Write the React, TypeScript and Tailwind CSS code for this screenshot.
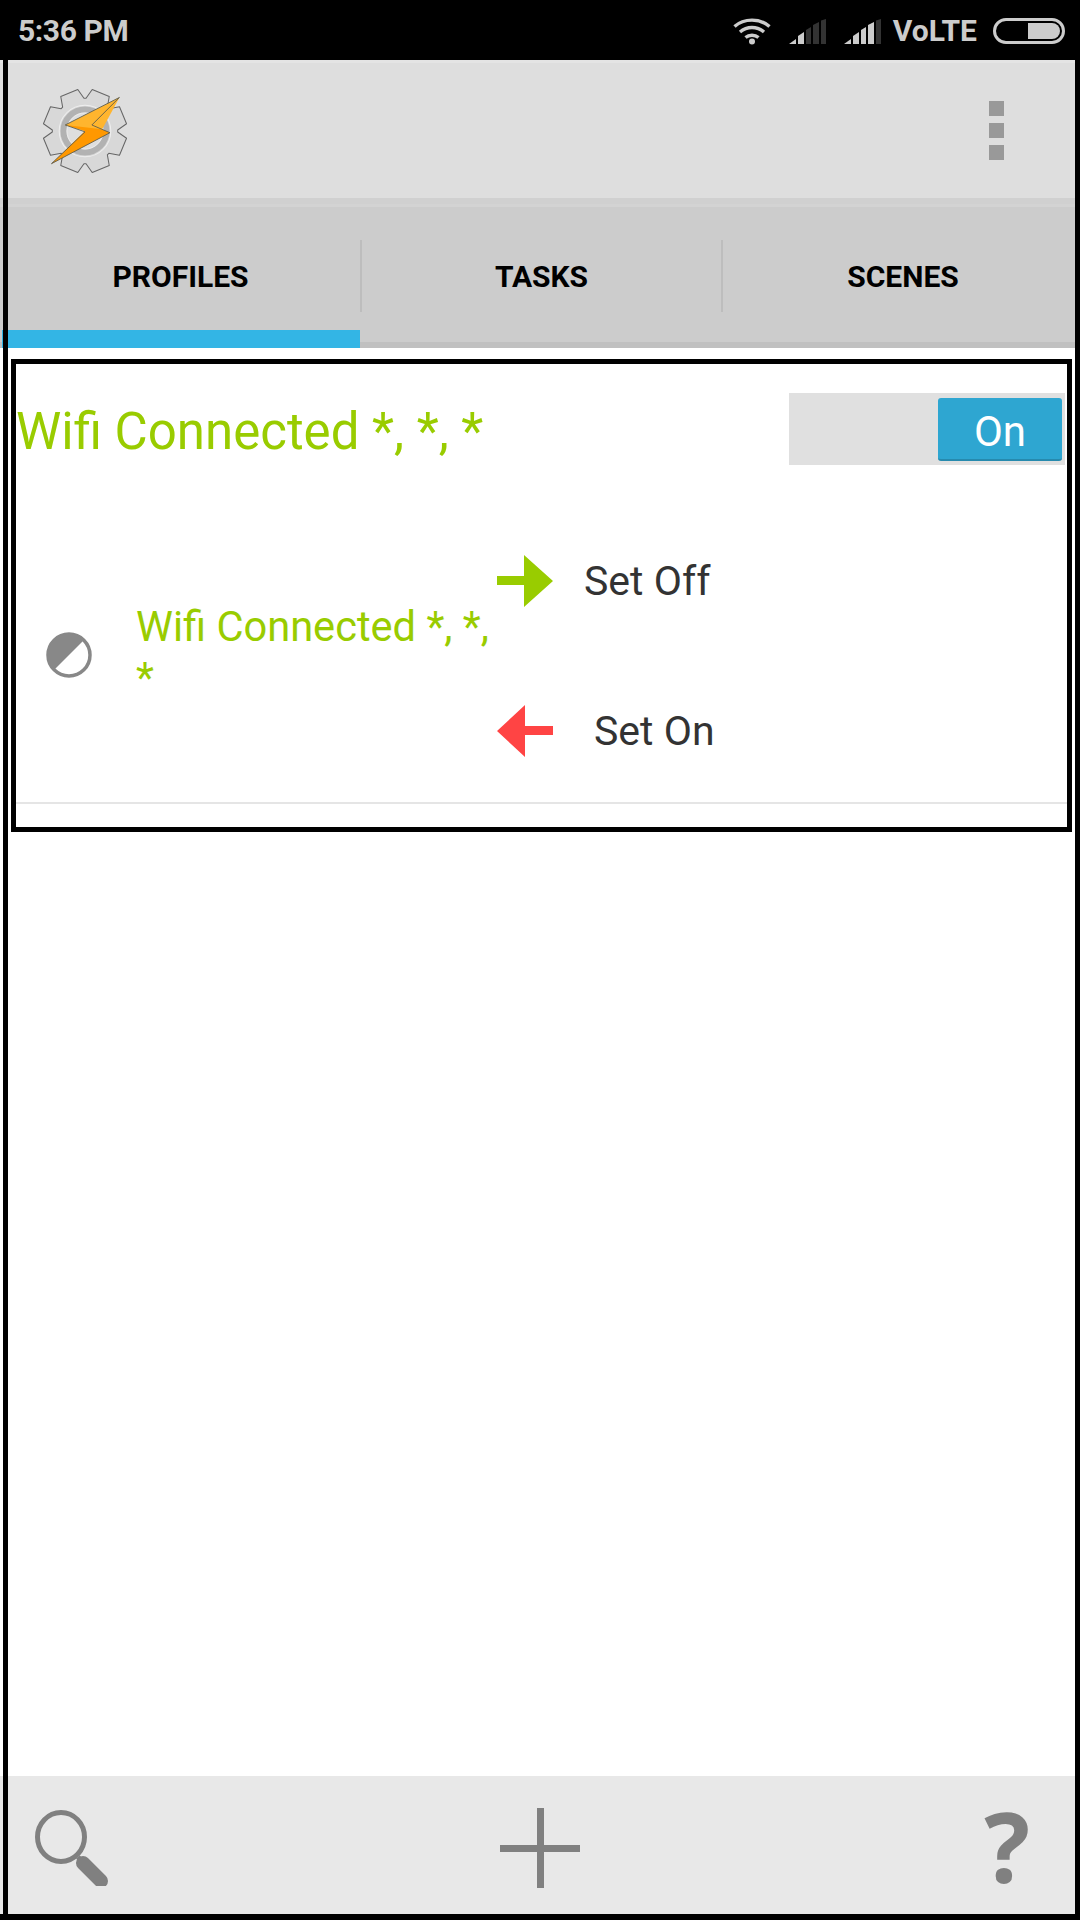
const roboto = { fontFamily: 'Roboto, "Liberation Sans", sans-serif' };

// 8-toothed gear outline around (50,50) in a 100 box
function gearPoints() {
  const pts: string[] = [];
  for (let i = 0; i < 8; i++) {
    const a = ((i * 45 + 22.5) * Math.PI) / 180;
    const corners: [number, number][] = [
      [38, -0.36],
      [49, -0.22],
      [49, 0.22],
      [38, 0.36],
    ];
    corners.forEach(([r, d]) => {
      pts.push(`${(50 + r * Math.cos(a + d)).toFixed(1)},${(50 + r * Math.sin(a + d)).toFixed(1)}`);
    });
  }
  return pts.join(' ');
}

function Logo() {
  return (
    <svg width="86" height="86" viewBox="0 0 100 100">
      <polygon points={gearPoints()} fill="#d8d8d8" stroke="#666" strokeWidth="1.2" strokeLinejoin="round" />
      <circle cx="50" cy="50" r="30" fill="none" stroke="#eee" strokeWidth="1.2" />
      <circle cx="50" cy="50" r="25" fill="none" stroke="#b2b2b2" strokeWidth="7" />
      <circle cx="50" cy="50" r="21" fill="#dedede" stroke="#eee" strokeWidth="1" />
      <polygon points="90,11 27,43 50,50 70,48" fill="#ffb52e" />
      <polygon points="27,43 50,50 11,88 79,52 70,48" fill="#ff9800" />
      <polygon points="90,11 27,43 50,51 11,88 79,52 58,43" fill="none" stroke="#5a5a4a" strokeWidth="1" strokeLinejoin="round" />
    </svg>
  );
}

function Wifi() {
  return (
    <svg width="38" height="28" viewBox="0 0 38 28" fill="none" stroke="#cccccc" strokeWidth="3.4">
      <path d="M1.5 9.5C11 1 27 1 36.5 9.5" />
      <path d="M7 15C14 9 24 9 31 15" />
      <path d="M12.5 20.5C16 17.5 22 17.5 25.5 20.5" />
      <circle cx="19" cy="24.5" r="3" fill="#cccccc" stroke="none" />
    </svg>
  );
}

function Signal({ lit }: { lit: number }) {
  const bars = [
    'M0 25L7 20V25Z',
    'M9 25V17L15 13V25Z',
    'M17 25V11L22 8V25Z',
    'M24 25V6L30 3V25Z',
    'M32 25V1.5L37 0V25Z',
  ];
  return (
    <svg width="37" height="25" viewBox="0 0 37 25">
      {bars.map((d, i) => (
        <path key={i} d={d} fill={i < lit ? '#cccccc' : '#333333'} />
      ))}
    </svg>
  );
}

function StatusBar() {
  return (
    <div className="h-[60px] bg-black flex items-center text-[#cccccc] font-bold text-[30px] shrink-0 pt-[2px]" style={roboto}>
      <span className="ml-[18px] leading-none tracking-[-0.4px]">5:36 PM</span>
      <div className="ml-auto flex items-center pr-[15px]">
        <Wifi />
        <div className="ml-[18px]"><Signal lit={2} /></div>
        <div className="ml-[18px]"><Signal lit={4} /></div>
        <span className="ml-[12px] leading-none">VoLTE</span>
        <div className="ml-[16px] w-[72px] h-[26px] rounded-full border-[3px] border-[#cccccc] flex justify-end p-[2px]">
          <div className="w-[32px] h-full bg-[#cccccc] rounded-r-full" />
        </div>
      </div>
    </div>
  );
}

function Header() {
  return (
    <div className="h-[138px] bg-[#dedede] border-t-[3px] border-[#e4e4e4] flex items-center justify-between pl-[42px] pr-[71px] shrink-0">
      <Logo />
      <div className="flex flex-col gap-[7px]">
        <div className="w-[15px] h-[15px] bg-[#999999]" />
        <div className="w-[15px] h-[15px] bg-[#999999]" />
        <div className="w-[15px] h-[15px] bg-[#999999]" />
      </div>
    </div>
  );
}

function Tabs() {
  return (
    <div className="relative shrink-0 border-t-[6px] border-[#d0d0d0]">
      <div className="h-[3px] bg-[#d3d3d3]" />
      <div className="h-[141px] bg-[#cccccc] border-b-[6px] border-[#c0c0c0] grid grid-cols-[362px_361px_1fr] text-black text-[30px] font-bold pt-[33px]" style={roboto}>
        <div className="h-[72px] flex items-center justify-center border-r-2 border-[#bdbdbd] pl-[1px]">PROFILES</div>
        <div className="h-[72px] flex items-center justify-center border-r-2 border-[#bdbdbd]">TASKS</div>
        <div className="h-[72px] flex items-center justify-center pl-[8px]">SCENES</div>
      </div>
      <div className="absolute left-[2px] bottom-0 w-[358px] h-[18px] bg-[#33b5e5]" />
    </div>
  );
}

function ArrowRight() {
  return (
    <svg width="56" height="52" viewBox="0 0 56 52">
      <polygon points="0,21 27,21 27,0 56,26 27,52 27,30 0,30" fill="#99cc00" />
    </svg>
  );
}

function ArrowLeft() {
  return (
    <svg width="56" height="52" viewBox="0 0 56 52">
      <polygon points="56,21 28,21 28,0 0,26 28,52 28,30 56,30" fill="#ff4444" />
    </svg>
  );
}

function ProfileBox() {
  return (
    <div className="border-[5px] border-black h-[473px]" style={roboto}>
      <div className="flex items-center justify-between pt-[29px] pr-[2px]">
        <span className="text-[#99cc00] text-[51px] leading-none pt-[5px]">Wifi Connected *, *, *</span>
        <div className="w-[276px] h-[72px] bg-[#e0e0e0] flex justify-end items-center pr-[3px]">
          <div className="w-[124px] h-[63px] bg-[#2ea6d1] rounded-[3px] border-b-2 border-[#268aae] flex items-center justify-center text-white text-[42px] pt-[6px]">
            On
          </div>
        </div>
      </div>

      <div className="flex items-center mt-[75px] mb-[30px]">
        {/* state circle */}
        <svg width="46" height="46" viewBox="0 0 46 46" className="ml-[30px] shrink-0 -mt-[2px]">
          <circle cx="23" cy="23" r="21" fill="#fff" stroke="#888" strokeWidth="3.5" />
          <path d="M8 38A21 21 0 0 1 38 8Z" fill="#888" />
        </svg>
        <div className="ml-[44px] w-[361px] text-[#99cc00] text-[41.6px] leading-[51px] -mt-[8px] shrink-0">
          Wifi Connected *, *, *
        </div>
        <div className="flex flex-col gap-[68px]">
          <div className="h-[82px] flex items-center">
            <ArrowRight />
            <span className="ml-[31px] text-[#333333] text-[41px] pt-[2px]">Set Off</span>
          </div>
          <div className="h-[82px] flex items-center">
            <ArrowLeft />
            <span className="ml-[41px] text-[#333333] text-[41px] pt-[2px]">Set On</span>
          </div>
        </div>
      </div>
      <div className="h-[2px] bg-[#e5e5e5]" />
    </div>
  );
}

function BottomBar() {
  return (
    <div className="h-[138px] bg-[#e8e8e8] flex items-start shrink-0">
      <svg width="76" height="76" viewBox="0 0 76 76" className="ml-[35px] mt-[34px]">
        <ellipse cx="26" cy="27" rx="23.5" ry="24.5" fill="none" stroke="#808080" strokeWidth="5" />
        <path d="M43 47L48 53" stroke="#808080" strokeWidth="5" />
        <path d="M48 53L66 71" stroke="#808080" strokeWidth="14" strokeLinecap="round" />
      </svg>
      <svg width="80" height="80" viewBox="0 0 80 80" className="mt-[32px] ml-[389px]">
        <rect x="0" y="37" width="80" height="7" fill="#808080" />
        <rect x="37" y="0" width="7" height="80" fill="#808080" />
      </svg>
      <span className="ml-auto mr-[45px] mt-[10px] text-[#808080] text-[96px] leading-[120px] font-bold" style={{ fontFamily: '"Open Sans", sans-serif' }}>
        ?
      </span>
    </div>
  );
}

export default function App() {
  return (
    <div className="w-[1080px] h-[1920px] bg-white flex flex-col relative overflow-hidden">
      <StatusBar />
      <div className="flex-1 flex flex-col border-r-[5px] border-b-[6px] border-black min-h-0">
        <Header />
        <Tabs />
        <div className="flex-1 pl-[11px] pr-[3px] pt-[11px]">
          <ProfileBox />
        </div>
        <BottomBar />
      </div>
      {/* black edge drawn over the app */}
      <div className="absolute left-[3px] top-[60px] bottom-0 w-[5px] bg-black" />
      <div className="absolute left-0 right-0 bottom-0 h-[6px] bg-black" />
    </div>
  );
}
